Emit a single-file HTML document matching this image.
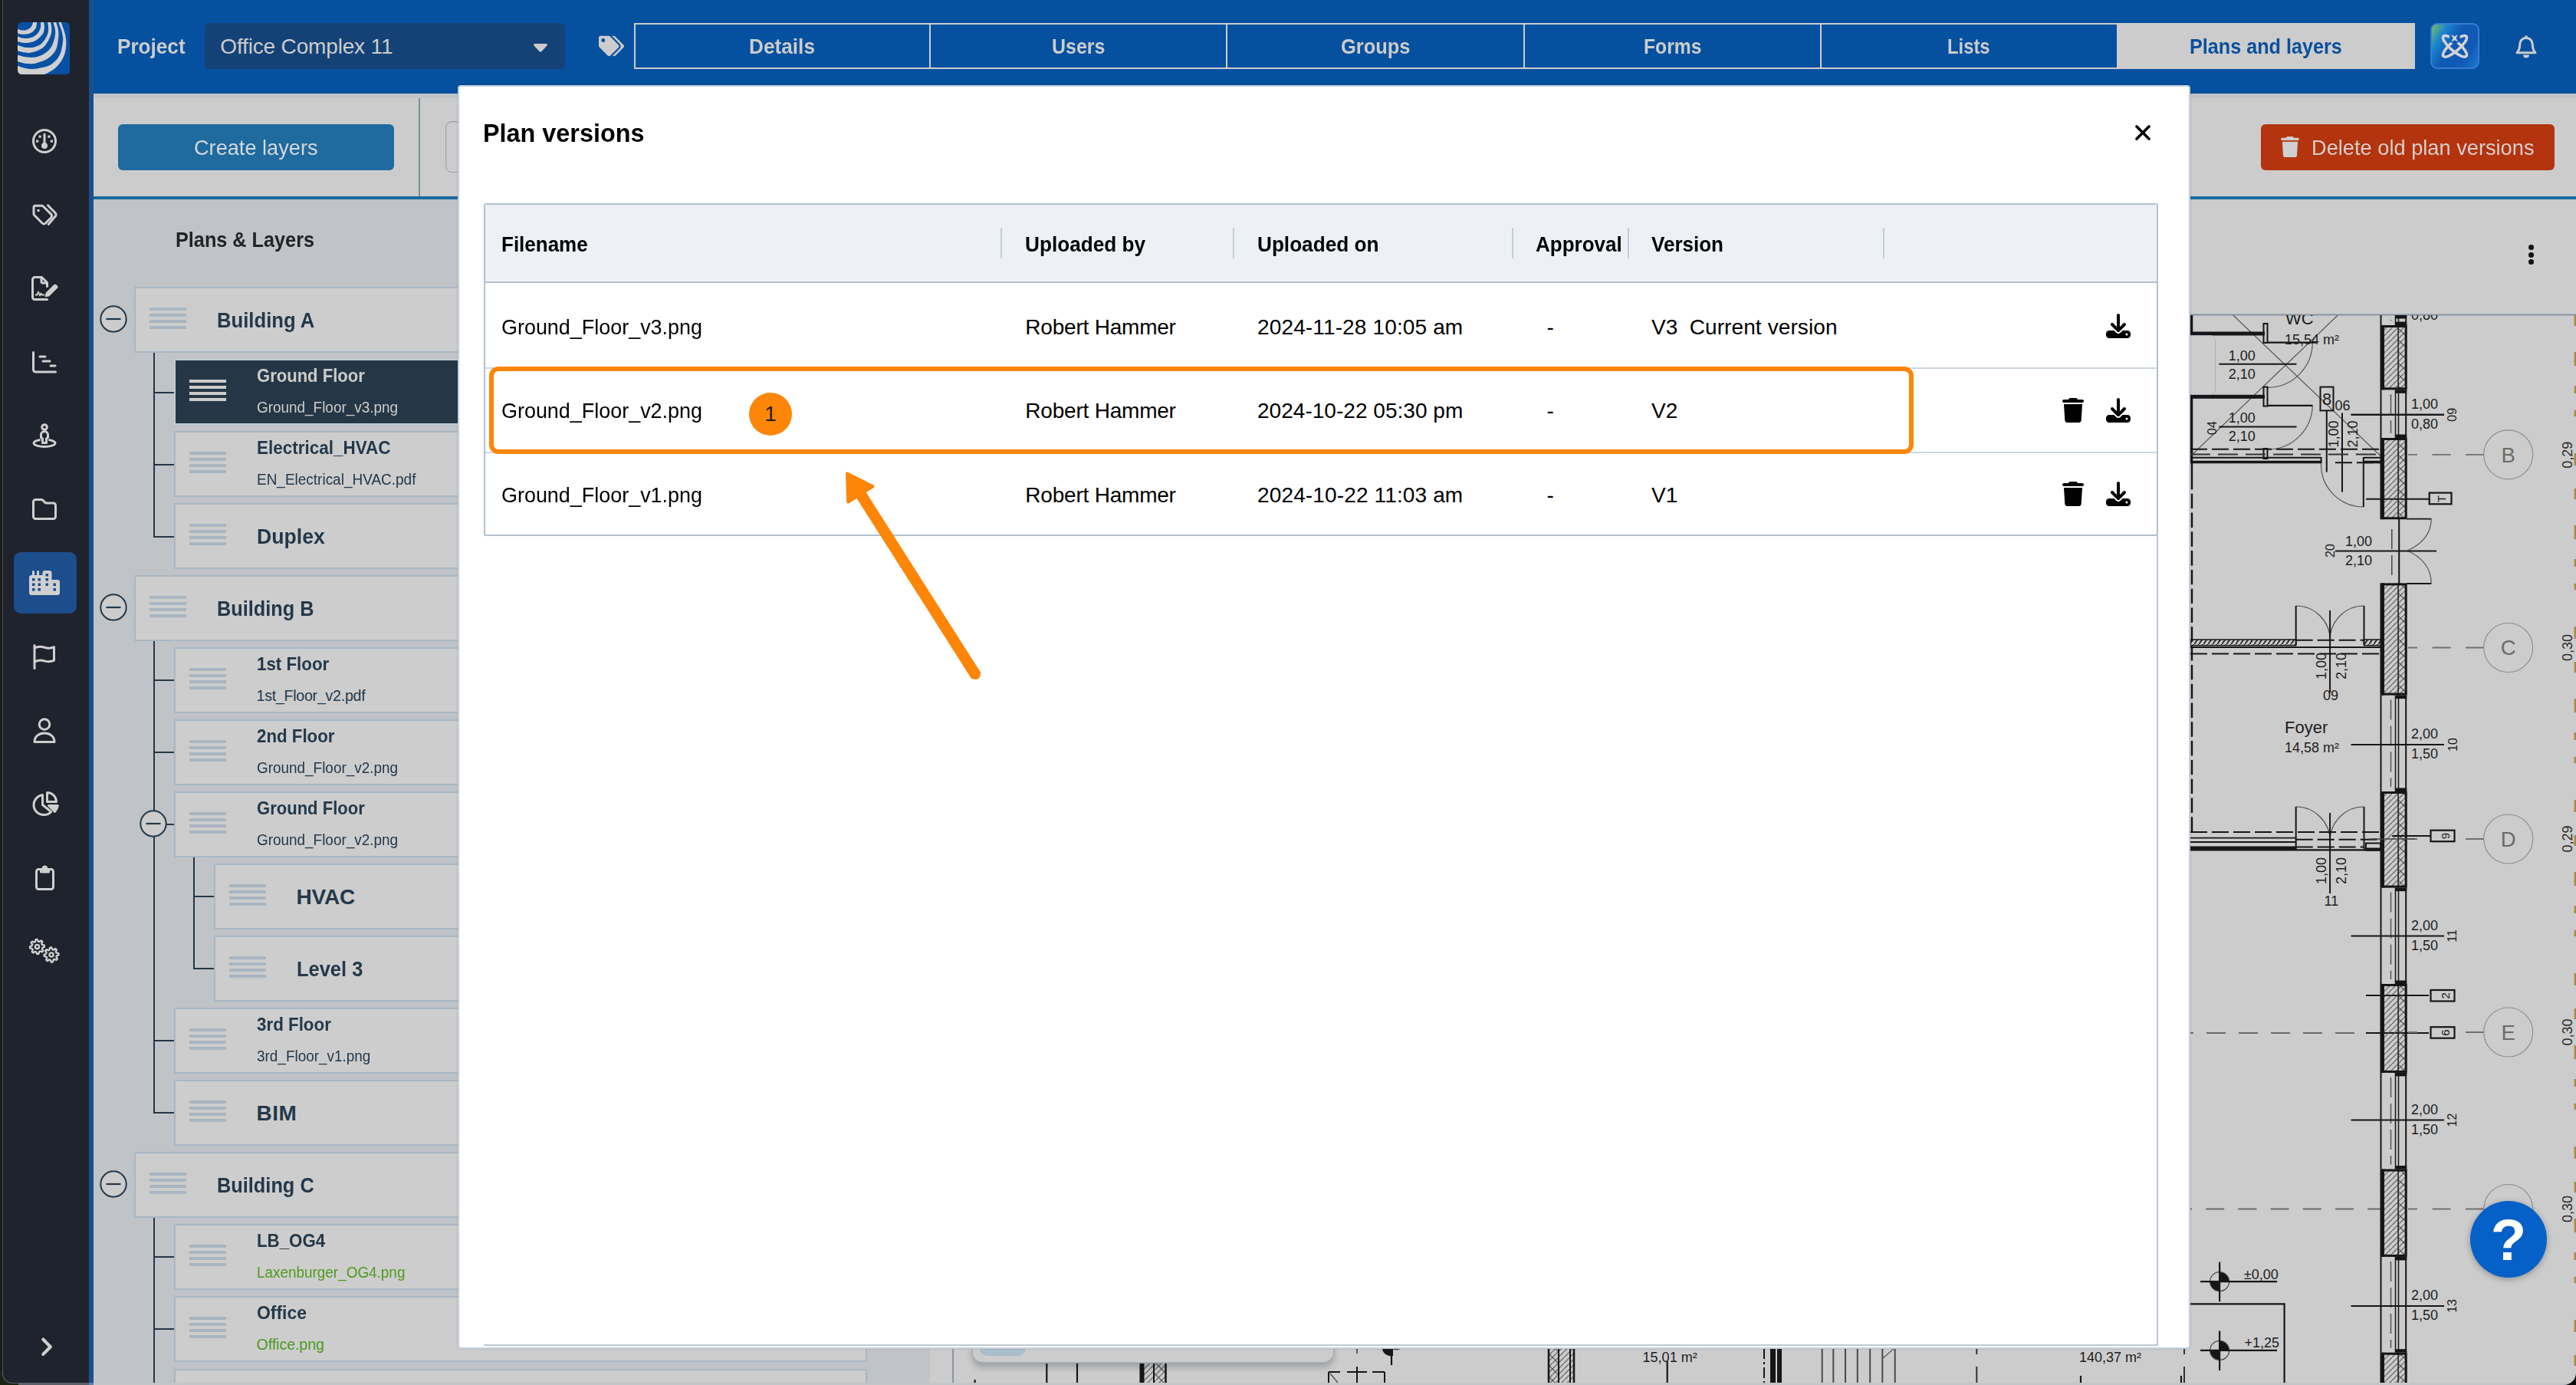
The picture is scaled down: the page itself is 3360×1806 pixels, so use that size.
<!DOCTYPE html>
<html lang="en"><head><meta charset="utf-8"><title>Plan versions</title>
<style>
html,body{margin:0;padding:0}
body{width:3360px;height:1806px;overflow:hidden;position:relative;background:#cccccc;font-family:'Liberation Sans',sans-serif}
div,span.t,svg{position:absolute;box-sizing:border-box}
span.t{white-space:pre;display:block;transform-origin:0 50%}
svg{overflow:visible}

</style></head>
<body>
<div style="left:0px;top:0px;width:116px;height:1806px;background:#1f232d"></div>
<div style="left:116px;top:0px;width:3244px;height:122px;background:#05509f"></div>
<div style="left:116px;top:0px;width:6px;height:1806px;background:#1b4f8c"></div>
<div style="left:122px;top:122px;width:3238px;height:6px;background:#c0c3c7"></div>
<div style="left:122px;top:128px;width:3238px;height:128px;background:#cccccc"></div>
<div style="left:122px;top:256px;width:3238px;height:4px;background:#1a6aa1"></div>
<div style="left:122px;top:260px;width:1091px;height:1546px;background:#c0c3c7"></div>
<div style="left:1213px;top:260px;width:2147px;height:1546px;background:#cccccc"></div>
<div style="left:546px;top:128px;width:2px;height:128px;background:#7f8f9d"></div>
<div style="left:154px;top:162px;width:360px;height:60px;background:#1f6a9e;border-radius:6px"></div>
<span class="t" style="left:253.2px;top:179.3px;font-size:28px;line-height:28px;color:#d2d8dd;transform:scaleX(0.9699);">Create layers</span>
<div style="left:580.5px;top:158.3px;width:60px;height:67px;border:1.500px solid #9f9f9f;border-radius:8px;background:#cccccc;box-shadow:inset 0 1px 2px rgba(0,0,0,0.08)"></div>
<div style="left:2949px;top:162px;width:383px;height:60px;background:#b3340f;border-radius:6px"></div>
<svg style="left:2975px;top:178px" width="24" height="27" viewBox="0 0 448 512"><path fill="#cfcfcf" d="M135.2 17.700L128 32H32C14.3 32 0 46.300 0 64S14.3 96 32 96H416c17.700 0 32-14.300 32-32s-14.300-32-32-32H320l-7.200-14.300C307.400 6.800 296.300 0 284.200 0H163.800c-12.100 0-23.200 6.800-28.600 17.700zM416 128H32L53.200 467c1.600 25.300 22.600 45 47.900 45H346.900c25.300 0 46.300-19.700 47.900-45L416 128z"/></svg>
<span class="t" style="left:3014.8px;top:179.3px;font-size:28px;line-height:28px;color:#d6cfcc;transform:scaleX(0.9721);">Delete old plan versions</span>
<div style="left:3298.2px;top:319.2px;width:7px;height:7px;background:#111;border-radius:50%"></div>
<div style="left:3298.2px;top:328.7px;width:7px;height:7px;background:#111;border-radius:50%"></div>
<div style="left:3298.2px;top:338.2px;width:7px;height:7px;background:#111;border-radius:50%"></div>
<span class="t" style="left:153.2px;top:47.3px;font-size:28px;line-height:28px;color:#cccccc;font-weight:700;transform:scaleX(0.9332);">Project</span>
<div style="left:267px;top:30px;width:470px;height:60px;background:#144277;border-radius:6px"></div>
<span class="t" style="left:287.3px;top:47.3px;font-size:28px;line-height:28px;color:#cccccc;letter-spacing:-0.16px;">Office Complex 11</span>
<svg style="left:696px;top:57px" width="18" height="11" viewBox="0 0 18 11"><path fill="#cccccc" d="M1.600 0h14.800c1.300 0 2 1.500 1.100 2.500l-7.300 7.800c-.7.700-1.800.7-2.400 0L.5 2.500C-.4 1.500.3 0 1.600 0z"/></svg>
<svg style="left:781px;top:46px" width="33" height="28" viewBox="0 0 640 512"><path fill="#cccccc" d="M497.900 225.900L286.100 14.100A48 48 0 0 0 252.100 0H48C21.500 0 0 21.500 0 48v204.100a48 48 0 0 0 14.100 33.900l211.900 211.900c18.700 18.700 49.100 18.700 67.900 0l204.100-204.100c18.700-18.700 18.700-49.100 0-67.900zM112 160c-26.500 0-48-21.500-48-48s21.500-48 48-48 48 21.500 48 48-21.500 48-48 48zm513.900 133.800L421.800 497.900c-18.700 18.700-49.100 18.700-67.900 0l-.4-.4L527.600 323.500c17-17 26.400-39.600 26.400-63.600s-9.400-46.600-26.400-63.600L331.400 0h48.700a48 48 0 0 1 33.900 14.100l211.900 211.900c18.700 18.700 18.700 49.100 0 67.900z"/></svg>
<div style="left:827px;top:30px;width:2323px;height:60px;border:2px solid #cccccc"></div>
<span class="t" style="left:977.0px;top:47.2px;font-size:28px;line-height:28px;color:#cccccc;font-weight:700;transform:scaleX(0.9365);">Details</span>
<div style="left:1212px;top:30px;width:2px;height:60px;background:#cccccc"></div>
<span class="t" style="left:1371.8px;top:47.2px;font-size:28px;line-height:28px;color:#cccccc;font-weight:700;transform:scaleX(0.8915);">Users</span>
<div style="left:1599px;top:30px;width:2px;height:60px;background:#cccccc"></div>
<span class="t" style="left:1748.8px;top:47.2px;font-size:28px;line-height:28px;color:#cccccc;font-weight:700;transform:scaleX(0.9080);">Groups</span>
<div style="left:1987px;top:30px;width:2px;height:60px;background:#cccccc"></div>
<span class="t" style="left:2143.8px;top:47.2px;font-size:28px;line-height:28px;color:#cccccc;font-weight:700;transform:scaleX(0.8811);">Forms</span>
<div style="left:2374px;top:30px;width:2px;height:60px;background:#cccccc"></div>
<span class="t" style="left:2540.2px;top:47.2px;font-size:28px;line-height:28px;color:#cccccc;font-weight:700;transform:scaleX(0.8507);">Lists</span>
<div style="left:2761px;top:30px;width:389px;height:60px;background:#cccccc"></div>
<span class="t" style="left:2856.2px;top:47.2px;font-size:28px;line-height:28px;color:#0a4f9e;font-weight:700;transform:scaleX(0.8990);">Plans and layers</span>
<div style="left:3170px;top:30px;width:64px;height:60px;border:2px solid #3a78d6;border-radius:9px;background:linear-gradient(122deg,#7cc35a 0%,#1b86cf 22%,#1059b5 45%,#1059b5 75%,#1a7ccd 100%)"></div>
<svg style="left:3181.500px;top:42px" width="40" height="36" viewBox="0 0 40 36">
<defs><mask id="aim"><rect x="-5" y="-5" width="50" height="46" fill="#fff"/><circle cx="19.700" cy="7.800" r="7.300" fill="#000"/></mask></defs>
<g fill="none" stroke="#d4d4d4" stroke-width="3.600" mask="url(#aim)">
<ellipse cx="20" cy="18.300" rx="19.800" ry="6.200" transform="rotate(41 20 18.300)"/>
<ellipse cx="20" cy="18.300" rx="19.800" ry="6.200" transform="rotate(-41 20 18.300)"/>
</g>
<path fill="#d4d4d4" d="M15.500 3 19.700 5.400 23.900 3 21.700 7.800 24 12.600 19.700 10.300 15.400 12.600 17.700 7.800z"/>
</svg>
<svg style="left:3281px;top:45px" width="28" height="32" viewBox="0 0 28 32">
<path fill="none" stroke="#cccccc" stroke-width="3" stroke-linejoin="round" d="M14 4.500c-5 0-8.300 3.800-8.300 8.800 0 5.600-1.700 8.200-3.700 10.400h24c-2-2.200-3.700-4.800-3.700-10.400 0-5-3.300-8.800-8.300-8.800z"/>
<path fill="#cccccc" d="M12.300 1.500h3.400v3.500h-3.400zM10 26.500h8a4 4 0 0 1-8 0z"/>
</svg>
<div style="left:0px;top:0px;width:3px;height:1806px;background:#1c1d17"></div>
<div style="left:3px;top:0px;width:1px;height:1806px;background:#4b4e52"></div>
<svg style="left:22.900px;top:28.900px" width="68" height="68" viewBox="0 0 68 68">
<defs><clipPath id="lg"><rect x="0" y="0" width="68" height="68" rx="5.500"/></clipPath></defs>
<g clip-path="url(#lg)">
<rect width="68" height="68" fill="#0651a5"/>
<g fill="#cfcfcf"><path d="M25.5 -2.5C25.5 -2.1 25.4 -1.2 25.2 0.0C25.0 1.2 24.9 3.5 24.5 5.0C24.1 6.5 23.5 7.9 22.8 9.1C22.1 10.2 21.1 11.1 20.1 11.9C19.1 12.7 18.0 13.4 16.8 14.0C15.7 14.6 14.5 15.0 13.2 15.3C11.9 15.6 10.5 15.7 9.1 15.8C7.7 15.9 6.5 15.9 5.0 15.7C3.5 15.5 1.2 14.9 0.0 14.6C-1.2 14.3 -2.1 14.1 -2.5 14.1L-2.5 8.4C-2.1 8.5 -1.2 8.8 0.0 9.1C1.2 9.4 3.6 10.3 5.0 10.5C6.4 10.7 7.4 10.6 8.6 10.5C9.8 10.4 10.9 10.2 11.9 9.9C12.9 9.6 13.7 9.2 14.6 8.6C15.5 8.0 16.6 7.2 17.3 6.4C18.0 5.6 18.5 4.7 19.0 3.6C19.5 2.5 19.8 1.0 20.1 0.0C20.4 -1.0 20.7 -2.1 20.9 -2.5z"/><path d="M33.9 -2.5C34.0 -2.1 34.0 -1.5 34.2 0.0C34.4 1.5 35.0 4.2 34.9 6.4C34.8 8.6 34.4 11.4 33.8 13.2C33.2 15.0 32.2 15.9 31.1 17.3C30.0 18.7 28.3 20.4 26.9 21.5C25.5 22.6 24.2 23.5 22.8 24.2C21.4 24.9 20.1 25.4 18.7 25.8C17.3 26.2 16.2 26.6 14.6 26.8C13.0 27.0 10.7 27.0 9.1 26.9C7.5 26.8 6.5 26.7 5.0 26.4C3.5 26.1 1.2 25.4 0.0 25.0C-1.2 24.6 -2.1 24.4 -2.5 24.3L-2.5 17.4C-2.1 17.6 -1.2 17.9 0.0 18.4C1.2 18.9 3.5 20.0 5.0 20.4C6.5 20.8 7.7 20.8 9.1 20.9C10.5 21.0 11.8 21.0 13.2 20.9C14.6 20.8 15.9 20.5 17.3 20.1C18.7 19.7 20.1 19.2 21.5 18.4C22.9 17.6 24.5 16.3 25.6 15.1C26.7 13.9 27.6 12.8 28.3 11.3C29.0 9.9 29.7 8.3 30.0 6.4C30.3 4.5 30.1 1.5 30.1 0.0C30.1 -1.5 30.1 -2.1 30.1 -2.5z"/><path d="M42.5 -2.5C42.6 -2.1 42.7 -1.5 43.0 0.0C43.3 1.5 44.0 4.4 44.2 6.4C44.4 8.4 44.4 10.1 44.2 11.9C44.0 13.7 43.7 15.6 43.1 17.3C42.5 19.0 41.7 20.8 40.9 22.3C40.1 23.8 39.4 25.1 38.5 26.5C37.6 27.9 36.6 29.6 35.5 30.8C34.4 32.0 33.8 32.7 32.1 33.8C30.5 34.9 27.6 36.4 25.6 37.3C23.6 38.2 21.9 38.7 20.1 39.1C18.3 39.5 16.9 39.9 14.6 39.9C12.3 39.9 8.8 39.4 6.4 39.0C4.0 38.6 1.5 37.7 0.0 37.3C-1.5 36.9 -2.1 36.7 -2.5 36.6L-2.5 28.8C-2.1 28.9 -1.2 29.2 0.0 29.7C1.2 30.2 3.5 31.1 5.0 31.6C6.5 32.1 7.7 32.5 9.1 32.7C10.5 33.0 11.8 33.0 13.2 33.1C14.6 33.2 15.9 33.2 17.3 33.1C18.7 33.0 20.1 32.7 21.5 32.4C22.9 32.1 24.2 31.7 25.6 31.1C27.0 30.5 28.5 29.8 29.7 28.9C30.9 28.0 32.0 26.9 33.0 25.8C34.0 24.7 34.8 23.7 35.7 22.3C36.6 20.9 37.7 19.0 38.4 17.3C39.1 15.6 39.6 13.7 39.9 11.9C40.2 10.1 40.2 8.4 40.1 6.4C40.0 4.4 39.3 1.5 39.0 0.0C38.7 -1.5 38.6 -2.1 38.6 -2.5z"/><path d="M49.3 -2.5C49.4 -2.1 49.6 -1.5 50.1 0.0C50.6 1.5 51.7 4.4 52.2 6.4C52.7 8.4 53.1 10.1 53.3 11.9C53.5 13.7 53.5 15.6 53.4 17.3C53.3 19.0 53.1 20.6 52.9 22.3C52.7 24.0 52.5 25.9 52.2 27.5C51.9 29.1 51.7 30.7 51.3 32.1C50.9 33.6 50.4 34.8 49.7 36.2C49.0 37.6 48.0 39.0 46.9 40.4C45.8 41.8 44.4 43.3 43.1 44.5C41.8 45.7 40.4 46.6 39.0 47.5C37.6 48.4 36.2 49.1 34.9 49.7C33.6 50.3 32.6 50.6 31.1 51.1C29.6 51.6 27.2 52.5 25.6 53.0C24.0 53.5 23.6 53.7 21.5 53.9C19.4 54.1 15.7 54.2 13.2 54.1C10.7 54.0 8.6 53.5 6.4 53.0C4.2 52.5 1.5 51.5 0.0 51.1C-1.5 50.7 -2.1 50.5 -2.5 50.4L-2.5 42.1C-2.1 42.2 -1.5 42.4 0.0 42.8C1.5 43.2 4.0 44.0 6.4 44.5C8.8 45.0 12.1 45.6 14.6 45.8C17.1 46.0 19.7 45.9 21.5 45.8C23.3 45.7 24.0 45.5 25.6 45.0C27.2 44.5 29.8 43.6 31.1 43.1C32.4 42.6 32.4 42.4 33.5 41.7C34.6 41.0 36.3 40.0 37.6 39.0C38.9 38.0 40.2 36.9 41.2 35.7C42.2 34.6 43.1 33.6 43.9 32.1C44.7 30.6 45.6 28.5 46.2 26.9C46.9 25.3 47.3 23.9 47.8 22.3C48.2 20.7 48.7 19.0 48.9 17.3C49.1 15.6 49.2 13.7 49.1 11.9C49.0 10.1 48.8 8.4 48.3 6.4C47.8 4.4 46.8 1.5 46.4 0.0C46.0 -1.5 45.8 -2.1 45.7 -2.5z"/><path d="M55.9 -2.5C56.1 -2.1 56.3 -1.5 56.8 0.0C57.3 1.5 58.3 4.4 59.0 6.4C59.7 8.4 60.4 10.1 60.9 11.9C61.4 13.7 61.9 15.6 62.3 17.3C62.7 19.0 62.9 20.7 63.1 22.3C63.3 23.9 63.3 25.3 63.3 26.9C63.3 28.5 63.3 30.3 63.1 32.1C62.9 33.9 62.7 35.8 62.3 37.6C61.9 39.4 61.4 41.3 60.7 43.1C60.0 44.9 59.2 46.8 58.2 48.6C57.2 50.4 56.0 52.4 54.6 54.1C53.2 55.8 51.7 57.5 50.0 59.0C48.3 60.5 46.3 61.9 44.5 63.1C42.7 64.3 40.6 65.4 39.0 66.2C37.4 67.0 36.3 67.3 34.9 68.0C33.5 68.7 31.2 69.8 30.5 70.2L-2.500 70.500L-2.5 55.9C-2.1 56.1 -1.5 56.3 0.0 56.8C1.5 57.3 4.0 58.4 6.4 59.0C8.8 59.6 12.3 60.4 14.6 60.7C16.9 61.0 18.3 61.0 20.1 60.9C21.9 60.8 23.8 60.7 25.6 60.4C27.4 60.1 29.3 59.6 31.1 59.3C32.9 58.9 34.7 58.7 36.2 58.3C37.8 57.9 39.0 57.4 40.4 56.8C41.8 56.1 43.1 55.3 44.5 54.4C45.9 53.5 47.3 52.4 48.6 51.1C49.9 49.9 51.2 48.3 52.2 46.9C53.2 45.5 54.1 44.1 54.9 42.6C55.7 41.1 56.3 39.4 56.8 37.6C57.3 35.9 57.6 33.9 57.9 32.1C58.2 30.3 58.6 28.5 58.8 26.9C59.0 25.3 59.2 23.9 59.2 22.3C59.2 20.7 59.0 19.0 58.7 17.3C58.4 15.6 58.1 13.7 57.6 11.9C57.1 10.1 56.4 8.4 55.7 6.4C55.0 4.4 53.9 1.5 53.4 0.0C52.9 -1.5 52.7 -2.1 52.5 -2.5z"/></g>
</g></svg>
<svg style="left:42.0px;top:168.0px" width="32" height="32" viewBox="0 0 32 32"><g fill="none" stroke="#cfcfcf" stroke-width="3" stroke-linecap="round" stroke-linejoin="round"><circle cx="16" cy="16" r="14.500"/><path d="M16 7v14" /><circle cx="16" cy="22" r="2.500" fill="#cfcfcf"/><g stroke="none" fill="#cfcfcf"><rect x="8.500" y="8.500" width="3.200" height="3.200"/><rect x="20.300" y="8.500" width="3.200" height="3.200"/><rect x="5" y="14.500" width="3.200" height="3.200"/><rect x="23.800" y="14.500" width="3.200" height="3.200"/></g></g></svg>
<svg style="left:42.0px;top:266.0px" width="32" height="28" viewBox="0 0 32 28"><g fill="none" stroke="#cfcfcf" stroke-width="3" stroke-linecap="round" stroke-linejoin="round"><path d="M2 4.500v8.200c0 .8.300 1.500.9 2.100l10.200 10.200c1.200 1.200 3.100 1.200 4.300 0l7.300-7.300c1.200-1.200 1.200-3.100 0-4.300L14.500 3.200c-.6-.6-1.300-.9-2.100-.9H4.200C3 2.300 2 3.300 2 4.500z"/><path d="M20.500 1.800l9.700 10c1.200 1.200 1.200 3.100 0 4.300L21.200 26.500"/><rect x="6.500" y="7" width="3" height="3" fill="#cfcfcf" stroke="none"/></g></svg>
<svg style="left:40.0px;top:360.0px" width="36" height="32" viewBox="0 0 36 32"><g fill="none" stroke="#cfcfcf" stroke-width="3" stroke-linecap="round" stroke-linejoin="round"><path d="M21.500 30.500H5.500c-1.700 0-3-1.300-3-3v-23c0-1.700 1.300-3 3-3h9l7 7v5"/><path d="M14 2v5c0 1.100.9 2 2 2h5"/><path d="M6.500 24.500h2l1.500-4 2 5 1.500-3 1 2h3" stroke-width="1.800"/><path fill="#cfcfcf" stroke-width="1.500" d="M19.500 26.500l1-4.500 10-10c.8-.8 2-.8 2.800 0l.7.700c.8.800.8 2 0 2.800l-10 10z"/></g></svg>
<svg style="left:42.0px;top:457.5px" width="32" height="29" viewBox="0 0 32 29"><g fill="none" stroke="#cfcfcf" stroke-width="3" stroke-linecap="round" stroke-linejoin="round"><path d="M1.500 1.500v22.500c0 1.700 1.300 3 3 3h26"/><path d="M10 7h7M14 13h9M24 19h6"/></g></svg>
<svg style="left:42.0px;top:552.0px" width="32" height="32" viewBox="0 0 32 32"><g fill="none" stroke="#cfcfcf" stroke-width="3" stroke-linecap="round" stroke-linejoin="round"><circle cx="16" cy="5" r="3.300"/><path d="M11.500 15c0-2.500 2-4.500 4.500-4.500s4.500 2 4.500 4.500v3.500l-2 1.500v5.500h-5v-5.500l-2-1.500z"/><path d="M9.500 21.800c-4.500.8-7.500 2.300-7.500 4 0 2.600 6.300 4.700 14 4.700s14-2.100 14-4.700c0-1.700-3-3.200-7.500-4"/></g></svg>
<svg style="left:42.0px;top:650.0px" width="32" height="28" viewBox="0 0 32 28"><g fill="none" stroke="#cfcfcf" stroke-width="3" stroke-linecap="round" stroke-linejoin="round"><path d="M1.500 23.500v-19c0-1.700 1.300-3 3-3h7.300c.8 0 1.600.3 2.100.9l2.700 2.700c.6.600 1.300.9 2.100.9h8.800c1.700 0 3 1.300 3 3v14.500c0 1.700-1.300 3-3 3h-23c-1.700 0-3-1.300-3-3z"/></g></svg>
<div style="left:18px;top:720px;width:82px;height:80px;background:#1b4e8b;border-radius:9px"></div>
<svg style="left:38px;top:744px" width="40" height="32" viewBox="0 0 40 32">
<path fill="#cfcfcf" d="M4 1.500c0-.8.700-1.500 1.500-1.500S7 .7 7 1.500V6h3V1.500C10 .7 10.700 0 11.500 0S13 .7 13 1.500V6h4.500V3c0-1.700 1.300-3 3-3h6c1.700 0 3 1.300 3 3v9h7.500c1.700 0 3 1.300 3 3v14c0 1.700-1.300 3-3 3H3c-1.700 0-3-1.300-3-3V9c0-1.700 1.300-3 3-3h1z"/>
<g fill="#1b4e8b"><rect x="4" y="10" width="3.500" height="3.500"/><rect x="11.500" y="10" width="3.500" height="3.500"/><rect x="4" y="16.500" width="3.500" height="3.500"/><rect x="11.500" y="16.500" width="3.500" height="3.500"/><rect x="4" y="23" width="3.500" height="3.500"/><rect x="11.500" y="23" width="3.500" height="3.500"/><rect x="21.500" y="4" width="3.500" height="3.500"/><rect x="21.500" y="10" width="3.500" height="3.500"/><rect x="21.500" y="16.500" width="3.500" height="3.500"/><rect x="31.500" y="16.500" width="3.500" height="3.500"/><rect x="31.500" y="23" width="3.500" height="3.500"/></g></svg>
<svg style="left:43.0px;top:839.5px" width="30" height="33" viewBox="0 0 30 33"><g fill="none" stroke="#cfcfcf" stroke-width="3" stroke-linecap="round" stroke-linejoin="round"><path d="M2 1.500v30"/><path d="M2 5c5-2.500 8.500-2.200 13-.8s8 1.500 12.500-.5v17.500c-4.500 2.200-8 2.200-12.500.7S7 20.500 2 23"/></g></svg>
<svg style="left:43.0px;top:935.5px" width="30" height="33" viewBox="0 0 30 33"><g fill="none" stroke="#cfcfcf" stroke-width="3" stroke-linecap="round" stroke-linejoin="round"><circle cx="15" cy="8.500" r="6.800"/><path d="M2 31.500c0-7 5.500-11.500 13-11.500s13 4.500 13 11.500z"/></g></svg>
<svg style="left:41.5px;top:1032.0px" width="35" height="32" viewBox="0 0 35 32"><g fill="none" stroke="#cfcfcf" stroke-width="3" stroke-linecap="round" stroke-linejoin="round"><path d="M13.500 4.500C7 5.500 2 11 2 17.800c0 7.400 6 12.700 13.400 12.700 3.600 0 6.900-1.400 9.300-3.800L13.500 17.500z"/><path d="M19.500 1.500v12h12c0-6.600-5.400-12-12-12z"/><path fill="#cfcfcf" d="M21.500 18.500h11.800c-.4 3-1.700 5.700-3.700 7.800z"/></g></svg>
<svg style="left:45.5px;top:1127.5px" width="25" height="33" viewBox="0 0 25 33"><g fill="none" stroke="#cfcfcf" stroke-width="3" stroke-linecap="round" stroke-linejoin="round"><path d="M8 5.500H4.500c-1.700 0-3 1.300-3 3v20c0 1.700 1.300 3 3 3h16c1.700 0 3-1.300 3-3v-20c0-1.700-1.300-3-3-3H17"/><path fill="#cfcfcf" d="M7.500 9V6.500c0-.6.400-1 1-1h1.200C10 3.500 11 2 12.500 2s2.500 1.500 2.800 3.500h1.200c.6 0 1 .4 1 1V9z"/></g></svg>
<svg style="left:37.5px;top:1224.0px" width="40" height="32" viewBox="0 0 40 32"><g fill="none" stroke="#cfcfcf" stroke-width="3" stroke-linecap="round" stroke-linejoin="round"><path d="M19.8 8.6 L20.0 10.7 L17.4 11.9 L16.9 13.3 L18.4 15.8 L17.1 17.3 L14.4 16.3 L13.1 17.0 L12.4 19.8 L10.3 20.0 L9.1 17.4 L7.7 16.9 L5.2 18.4 L3.7 17.1 L4.7 14.4 L4.0 13.1 L1.2 12.4 L1.0 10.3 L3.6 9.1 L4.1 7.7 L2.6 5.2 L3.9 3.7 L6.6 4.7 L7.9 4.0 L8.6 1.2 L10.7 1.0 L11.9 3.6 L13.3 4.1 L15.8 2.6 L17.3 3.9 L16.3 6.6 L17.0 7.9z" stroke-width="2.400"/><circle cx="10.5" cy="10.5" r="2.6" stroke-width="2.400"/><path d="M38.3 19.1 L38.5 21.2 L35.9 22.4 L35.4 23.8 L36.9 26.3 L35.6 27.8 L32.9 26.8 L31.6 27.5 L30.9 30.3 L28.8 30.5 L27.6 27.9 L26.2 27.4 L23.7 28.9 L22.2 27.6 L23.2 24.9 L22.5 23.6 L19.7 22.9 L19.5 20.8 L22.1 19.6 L22.6 18.2 L21.1 15.7 L22.4 14.2 L25.1 15.2 L26.4 14.5 L27.1 11.7 L29.2 11.5 L30.4 14.1 L31.8 14.6 L34.3 13.1 L35.8 14.4 L34.8 17.1 L35.5 18.4z" stroke-width="2.400"/><circle cx="29" cy="21" r="2.6" stroke-width="2.400"/></g></svg>
<svg style="left:52px;top:1742px" width="18" height="28" viewBox="0 0 18 28"><path fill="none" stroke="#cfcfcf" stroke-width="4.200" stroke-linecap="round" stroke-linejoin="round" d="M4.300 4.500 13.800 14.200 4.300 23.900"/></svg>
<span class="t" style="left:229.0px;top:299.0px;font-size:28px;line-height:28px;color:#222326;font-weight:700;transform:scaleX(0.9015);">Plans &amp; Layers</span>
<div style="left:200px;top:459px;width:2px;height:241px;background:#253746"></div>
<div style="left:200px;top:511px;width:27px;height:2px;background:#253746"></div>
<div style="left:200px;top:605px;width:27px;height:2px;background:#253746"></div>
<div style="left:200px;top:699px;width:27px;height:2px;background:#253746"></div>
<div style="left:200px;top:835px;width:2px;height:617px;background:#253746"></div>
<div style="left:200px;top:886px;width:27px;height:2px;background:#253746"></div>
<div style="left:200px;top:980px;width:27px;height:2px;background:#253746"></div>
<div style="left:200px;top:1074px;width:27px;height:2px;background:#253746"></div>
<div style="left:200px;top:1356px;width:27px;height:2px;background:#253746"></div>
<div style="left:200px;top:1450px;width:27px;height:2px;background:#253746"></div>
<div style="left:252px;top:1117px;width:2px;height:147px;background:#253746"></div>
<div style="left:252px;top:1168px;width:27px;height:2px;background:#253746"></div>
<div style="left:252px;top:1262px;width:27px;height:2px;background:#253746"></div>
<div style="left:200px;top:1587px;width:2px;height:219px;background:#253746"></div>
<div style="left:200px;top:1638px;width:27px;height:2px;background:#253746"></div>
<div style="left:200px;top:1732px;width:27px;height:2px;background:#253746"></div>
<div style="left:175px;top:374.1px;width:956px;height:85.8px;background:#cdcdcd;border:2px solid #a8b7c5"></div>
<div style="left:195px;top:401px;width:48px;height:4px;background:#a9b5c0"></div><div style="left:195px;top:409px;width:48px;height:4px;background:#a9b5c0"></div><div style="left:195px;top:417px;width:48px;height:4px;background:#a9b5c0"></div><div style="left:195px;top:425px;width:48px;height:4px;background:#a9b5c0"></div>
<span class="t" style="left:282.5px;top:404.1px;font-size:28px;line-height:28px;color:#24384a;font-weight:700;transform:scaleX(0.9170);">Building A</span>
<svg style="left:129.5px;top:398px" width="36" height="36" viewBox="0 0 36 36"><circle cx="18" cy="18" r="16.700" fill="#cccccc" stroke="#22384b" stroke-width="2"/><path d="M8.500 18h19" stroke="#22384b" stroke-width="2.200"/></svg>
<div style="left:227px;top:468.1px;width:904px;height:85.8px;background:#253746;border:2px solid #c3ccd4"></div>
<div style="left:247px;top:495px;width:48px;height:4px;background:#cccccc"></div><div style="left:247px;top:503px;width:48px;height:4px;background:#cccccc"></div><div style="left:247px;top:511px;width:48px;height:4px;background:#cccccc"></div><div style="left:247px;top:519px;width:48px;height:4px;background:#cccccc"></div>
<span class="t" style="left:334.5px;top:478.4px;font-size:24px;line-height:24px;color:#cccccc;font-weight:700;transform:scaleX(0.9184);">Ground Floor</span>
<span class="t" style="left:334.5px;top:522.2px;font-size:19.5px;line-height:19.5px;color:#cccccc;transform:scaleX(0.9699);">Ground_Floor_v3.png</span>
<div style="left:227px;top:562.1px;width:904px;height:85.8px;background:#cdcdcd;border:2px solid #a8b7c5"></div>
<div style="left:247px;top:589px;width:48px;height:4px;background:#a9b5c0"></div><div style="left:247px;top:597px;width:48px;height:4px;background:#a9b5c0"></div><div style="left:247px;top:605px;width:48px;height:4px;background:#a9b5c0"></div><div style="left:247px;top:613px;width:48px;height:4px;background:#a9b5c0"></div>
<span class="t" style="left:334.5px;top:572.4px;font-size:24px;line-height:24px;color:#24384a;font-weight:700;transform:scaleX(0.9361);">Electrical_HVAC</span>
<span class="t" style="left:334.5px;top:616.2px;font-size:19.5px;line-height:19.5px;color:#24384a;transform:scaleX(0.9731);">EN_Electrical_HVAC.pdf</span>
<div style="left:227px;top:656.1px;width:904px;height:85.8px;background:#cdcdcd;border:2px solid #a8b7c5"></div>
<div style="left:247px;top:683px;width:48px;height:4px;background:#a9b5c0"></div><div style="left:247px;top:691px;width:48px;height:4px;background:#a9b5c0"></div><div style="left:247px;top:699px;width:48px;height:4px;background:#a9b5c0"></div><div style="left:247px;top:707px;width:48px;height:4px;background:#a9b5c0"></div>
<span class="t" style="left:334.5px;top:686.1px;font-size:28px;line-height:28px;color:#24384a;font-weight:700;transform:scaleX(0.9512);">Duplex</span>
<div style="left:175px;top:750.1px;width:956px;height:85.8px;background:#cdcdcd;border:2px solid #a8b7c5"></div>
<div style="left:195px;top:777px;width:48px;height:4px;background:#a9b5c0"></div><div style="left:195px;top:785px;width:48px;height:4px;background:#a9b5c0"></div><div style="left:195px;top:793px;width:48px;height:4px;background:#a9b5c0"></div><div style="left:195px;top:801px;width:48px;height:4px;background:#a9b5c0"></div>
<span class="t" style="left:282.5px;top:780.1px;font-size:28px;line-height:28px;color:#24384a;font-weight:700;transform:scaleX(0.9037);">Building B</span>
<svg style="left:129.5px;top:774px" width="36" height="36" viewBox="0 0 36 36"><circle cx="18" cy="18" r="16.700" fill="#cccccc" stroke="#22384b" stroke-width="2"/><path d="M8.500 18h19" stroke="#22384b" stroke-width="2.200"/></svg>
<div style="left:227px;top:844.1px;width:904px;height:85.8px;background:#cdcdcd;border:2px solid #a8b7c5"></div>
<div style="left:247px;top:871px;width:48px;height:4px;background:#a9b5c0"></div><div style="left:247px;top:879px;width:48px;height:4px;background:#a9b5c0"></div><div style="left:247px;top:887px;width:48px;height:4px;background:#a9b5c0"></div><div style="left:247px;top:895px;width:48px;height:4px;background:#a9b5c0"></div>
<span class="t" style="left:334.5px;top:854.4px;font-size:24px;line-height:24px;color:#24384a;font-weight:700;transform:scaleX(0.9295);">1st Floor</span>
<span class="t" style="left:334.5px;top:898.2px;font-size:19.5px;line-height:19.5px;color:#24384a;letter-spacing:-0.21px;">1st_Floor_v2.pdf</span>
<div style="left:227px;top:938.1px;width:904px;height:85.8px;background:#cdcdcd;border:2px solid #a8b7c5"></div>
<div style="left:247px;top:965px;width:48px;height:4px;background:#a9b5c0"></div><div style="left:247px;top:973px;width:48px;height:4px;background:#a9b5c0"></div><div style="left:247px;top:981px;width:48px;height:4px;background:#a9b5c0"></div><div style="left:247px;top:989px;width:48px;height:4px;background:#a9b5c0"></div>
<span class="t" style="left:334.5px;top:948.4px;font-size:24px;line-height:24px;color:#24384a;font-weight:700;transform:scaleX(0.9284);">2nd Floor</span>
<span class="t" style="left:334.5px;top:992.2px;font-size:19.5px;line-height:19.5px;color:#24384a;transform:scaleX(0.9699);">Ground_Floor_v2.png</span>
<div style="left:227px;top:1032.1px;width:904px;height:85.8px;background:#cdcdcd;border:2px solid #a8b7c5"></div>
<div style="left:247px;top:1059px;width:48px;height:4px;background:#a9b5c0"></div><div style="left:247px;top:1067px;width:48px;height:4px;background:#a9b5c0"></div><div style="left:247px;top:1075px;width:48px;height:4px;background:#a9b5c0"></div><div style="left:247px;top:1083px;width:48px;height:4px;background:#a9b5c0"></div>
<span class="t" style="left:334.5px;top:1042.4px;font-size:24px;line-height:24px;color:#24384a;font-weight:700;transform:scaleX(0.9184);">Ground Floor</span>
<span class="t" style="left:334.5px;top:1086.2px;font-size:19.5px;line-height:19.5px;color:#24384a;transform:scaleX(0.9699);">Ground_Floor_v2.png</span>
<svg style="left:181.5px;top:1056px" width="36" height="36" viewBox="0 0 36 36"><circle cx="18" cy="18" r="16.700" fill="#cccccc" stroke="#22384b" stroke-width="2"/><path d="M8.500 18h19" stroke="#22384b" stroke-width="2.200"/></svg>
<div style="left:279px;top:1126.1px;width:852px;height:85.8px;background:#cdcdcd;border:2px solid #a8b7c5"></div>
<div style="left:299px;top:1153px;width:48px;height:4px;background:#a9b5c0"></div><div style="left:299px;top:1161px;width:48px;height:4px;background:#a9b5c0"></div><div style="left:299px;top:1169px;width:48px;height:4px;background:#a9b5c0"></div><div style="left:299px;top:1177px;width:48px;height:4px;background:#a9b5c0"></div>
<span class="t" style="left:386.5px;top:1156.1px;font-size:28px;line-height:28px;color:#24384a;font-weight:700;letter-spacing:-0.22px;">HVAC</span>
<div style="left:279px;top:1220.1px;width:852px;height:85.8px;background:#cdcdcd;border:2px solid #a8b7c5"></div>
<div style="left:299px;top:1247px;width:48px;height:4px;background:#a9b5c0"></div><div style="left:299px;top:1255px;width:48px;height:4px;background:#a9b5c0"></div><div style="left:299px;top:1263px;width:48px;height:4px;background:#a9b5c0"></div><div style="left:299px;top:1271px;width:48px;height:4px;background:#a9b5c0"></div>
<span class="t" style="left:386.5px;top:1250.1px;font-size:28px;line-height:28px;color:#24384a;font-weight:700;transform:scaleX(0.9089);">Level 3</span>
<div style="left:227px;top:1314.1px;width:904px;height:85.8px;background:#cdcdcd;border:2px solid #a8b7c5"></div>
<div style="left:247px;top:1341px;width:48px;height:4px;background:#a9b5c0"></div><div style="left:247px;top:1349px;width:48px;height:4px;background:#a9b5c0"></div><div style="left:247px;top:1357px;width:48px;height:4px;background:#a9b5c0"></div><div style="left:247px;top:1365px;width:48px;height:4px;background:#a9b5c0"></div>
<span class="t" style="left:334.5px;top:1324.4px;font-size:24px;line-height:24px;color:#24384a;font-weight:700;transform:scaleX(0.9316);">3rd Floor</span>
<span class="t" style="left:334.5px;top:1368.2px;font-size:19.5px;line-height:19.5px;color:#24384a;transform:scaleX(0.9708);">3rd_Floor_v1.png</span>
<div style="left:227px;top:1408.1px;width:904px;height:85.8px;background:#cdcdcd;border:2px solid #a8b7c5"></div>
<div style="left:247px;top:1435px;width:48px;height:4px;background:#a9b5c0"></div><div style="left:247px;top:1443px;width:48px;height:4px;background:#a9b5c0"></div><div style="left:247px;top:1451px;width:48px;height:4px;background:#a9b5c0"></div><div style="left:247px;top:1459px;width:48px;height:4px;background:#a9b5c0"></div>
<span class="t" style="left:334.5px;top:1438.1px;font-size:28px;line-height:28px;color:#24384a;font-weight:700;letter-spacing:0.46px;">BIM</span>
<div style="left:175px;top:1502.1px;width:956px;height:85.8px;background:#cdcdcd;border:2px solid #a8b7c5"></div>
<div style="left:195px;top:1529px;width:48px;height:4px;background:#a9b5c0"></div><div style="left:195px;top:1537px;width:48px;height:4px;background:#a9b5c0"></div><div style="left:195px;top:1545px;width:48px;height:4px;background:#a9b5c0"></div><div style="left:195px;top:1553px;width:48px;height:4px;background:#a9b5c0"></div>
<span class="t" style="left:282.5px;top:1532.1px;font-size:28px;line-height:28px;color:#24384a;font-weight:700;transform:scaleX(0.9051);">Building C</span>
<svg style="left:129.5px;top:1526px" width="36" height="36" viewBox="0 0 36 36"><circle cx="18" cy="18" r="16.700" fill="#cccccc" stroke="#22384b" stroke-width="2"/><path d="M8.500 18h19" stroke="#22384b" stroke-width="2.200"/></svg>
<div style="left:227px;top:1596.1px;width:904px;height:85.8px;background:#cdcdcd;border:2px solid #a8b7c5"></div>
<div style="left:247px;top:1623px;width:48px;height:4px;background:#a9b5c0"></div><div style="left:247px;top:1631px;width:48px;height:4px;background:#a9b5c0"></div><div style="left:247px;top:1639px;width:48px;height:4px;background:#a9b5c0"></div><div style="left:247px;top:1647px;width:48px;height:4px;background:#a9b5c0"></div>
<span class="t" style="left:334.5px;top:1606.4px;font-size:24px;line-height:24px;color:#24384a;font-weight:700;transform:scaleX(0.9278);">LB_OG4</span>
<span class="t" style="left:334.5px;top:1650.2px;font-size:19.5px;line-height:19.5px;color:#4f9a1f;transform:scaleX(0.9695);">Laxenburger_OG4.png</span>
<div style="left:227px;top:1690.1px;width:904px;height:85.8px;background:#cdcdcd;border:2px solid #a8b7c5"></div>
<div style="left:247px;top:1717px;width:48px;height:4px;background:#a9b5c0"></div><div style="left:247px;top:1725px;width:48px;height:4px;background:#a9b5c0"></div><div style="left:247px;top:1733px;width:48px;height:4px;background:#a9b5c0"></div><div style="left:247px;top:1741px;width:48px;height:4px;background:#a9b5c0"></div>
<span class="t" style="left:334.5px;top:1700.4px;font-size:24px;line-height:24px;color:#24384a;font-weight:700;transform:scaleX(0.9557);">Office</span>
<span class="t" style="left:334.5px;top:1744.2px;font-size:19.5px;line-height:19.5px;color:#4f9a1f;letter-spacing:-0.02px;">Office.png</span>
<div style="left:227px;top:1785px;width:904px;height:84px;background:#cdcdcd;border:2px solid #a8b7c5"></div>
<svg style="left:0;top:0" width="3360" height="1806" viewBox="0 0 3360 1806" font-family="'Liberation Sans',sans-serif" fill="none">
<defs>
<pattern id="hat" width="7.500" height="7.500" patternUnits="userSpaceOnUse"><path d="M-1 8.500L8.500 -1" stroke="#4a4a4a" stroke-width="1.100"/></pattern>
<pattern id="hat2" width="15" height="15" patternUnits="userSpaceOnUse"><path d="M-1 -1L16 16" stroke="#4a4a4a" stroke-width="1.100"/></pattern>
<pattern id="hat3" width="6" height="8" patternUnits="userSpaceOnUse"><path d="M0 8L6 0" stroke="#222" stroke-width="1.800"/></pattern>
<clipPath id="planclip"><rect x="2857" y="411" width="503" height="1392"/></clipPath>
<clipPath id="stripclip"><rect x="1244" y="1759" width="1613" height="44"/></clipPath>
</defs>
<path d="M2857 410.500H3360" stroke="#8794a1" stroke-width="2"/>
<g clip-path="url(#planclip)">
<path d="M2912.8 411L3105.6 595" stroke="#555" stroke-width="1.2" fill="none"/>
<path d="M3049.3 411L2857 595" stroke="#555" stroke-width="1.2" fill="none"/>
<path d="M3016.300 446.600A58.700 58.700 0 0 1 2957.600 505.300" stroke="#555" stroke-width="1.2" fill="none"/>
<path d="M3016.300 528.900A58.700 58.700 0 0 1 2962 586" stroke="#555" stroke-width="1.2" fill="none"/>
<path d="M3027.600 603.600A55.200 55.200 0 0 0 3082.800 661" stroke="#555" stroke-width="1.2" fill="none"/>
<path d="M2994.700 790A44.400 44.400 0 0 1 3039.100 834.400" stroke="#555" stroke-width="1.2" fill="none"/>
<path d="M3083.500 790A44.400 44.400 0 0 0 3039.100 834.400" stroke="#555" stroke-width="1.2" fill="none"/>
<path d="M2994.700 1052A44.400 44.400 0 0 1 3039.100 1096.400" stroke="#555" stroke-width="1.2" fill="none"/>
<path d="M3083.500 1052A44.400 44.400 0 0 0 3039.100 1096.400" stroke="#555" stroke-width="1.2" fill="none"/>
<path d="M3171.200 676.700Q3171 704 3140 718" stroke="#555" stroke-width="1.2" fill="none"/>
<path d="M3171.200 761Q3171 732 3140 718" stroke="#555" stroke-width="1.2" fill="none"/>
<path d="M2858.5 411L2858.5 603" stroke="#161616" stroke-width="3.5" />
<path d="M2859 603L2859 619" stroke="#161616" stroke-width="2.4" />
<path d="M2859 618.9L2859 1086" stroke="#161616" stroke-width="2.4" stroke-dasharray="19.400 5.400" />
<rect x="2857" y="432.500" width="97" height="5" fill="#161616"/>
<rect x="2857" y="514.800" width="97" height="5" fill="#161616"/>
<rect x="2952.5" y="422" width="5" height="25" fill="none" stroke="#161616" stroke-width="2"/>
<rect x="2952.5" y="504.6" width="5" height="25" fill="none" stroke="#161616" stroke-width="2"/>
<rect x="2952.5" y="585" width="5" height="13" fill="none" stroke="#161616" stroke-width="2"/>
<path d="M2957.6 446.6L3021 446.6" stroke="#161616" stroke-width="2.2" />
<path d="M2957.6 528.9L3016.5 528.9" stroke="#161616" stroke-width="2.2" />
<path d="M2894.4 474.7L2995.5 474.7" stroke="#161616" stroke-width="2" />
<path d="M2894.4 556.4L2995.5 556.4" stroke="#161616" stroke-width="2" />
<text x="2981" y="423.4" font-size="22" fill="#1c1c1c" text-anchor="start">WC</text>
<text x="2980" y="449.4" font-size="18" fill="#1c1c1c" text-anchor="start">15,54 m²</text>
<text x="2906.7" y="470.4" font-size="18" fill="#1c1c1c" text-anchor="start">1,00</text>
<text x="2906.7" y="493.6" font-size="18" fill="#1c1c1c" text-anchor="start">2,10</text>
<text x="2906.7" y="551" font-size="18" fill="#1c1c1c" text-anchor="start">1,00</text>
<text x="2906.7" y="575" font-size="18" fill="#1c1c1c" text-anchor="start">2,10</text>
<text x="2891" y="567" font-size="16" fill="#1c1c1c" text-anchor="start" transform="rotate(-90 2891 567)">04</text>
<rect x="3026.5" y="504.6" width="17" height="30.8" fill="none" stroke="#161616" stroke-width="2"/>
<text x="3035" y="528" font-size="22" fill="#1c1c1c" text-anchor="middle">8</text>
<text x="3045.6" y="535.4" font-size="18" fill="#1c1c1c" text-anchor="start">06</text>
<path d="M3034.8 535.4L3034.8 615.5" stroke="#161616" stroke-width="2" />
<path d="M3055 538.6L3055 641.5" stroke="#161616" stroke-width="2" />
<text x="3049.5" y="583.5" font-size="18" fill="#1c1c1c" text-anchor="start" transform="rotate(-90 3049.5 583.5)">1,00</text>
<text x="3074.5" y="583.5" font-size="18" fill="#1c1c1c" text-anchor="start" transform="rotate(-90 3074.5 583.5)">2,10</text>
<path d="M3066.6 540.8L3188 540.8" stroke="#161616" stroke-width="2" />
<path d="M2857 585.8L3105 585.8" stroke="#161616" stroke-width="2" stroke-dasharray="22 6" />
<path d="M2857 592.5L3105 592.5" stroke="#333" stroke-width="1.8" stroke-dasharray="26 10" />
<path d="M3046 603.2L3105 603.2" stroke="#161616" stroke-width="2" stroke-dasharray="22 6" />
<path d="M2857 596.8L3027.6 596.8" stroke="#161616" stroke-width="2" />
<path d="M2857 602.5L3027.6 602.5" stroke="#161616" stroke-width="3.5" />
<path d="M3027.6 596L3027.6 604" stroke="#161616" stroke-width="2" />
<path d="M3082.8 596.8L3105.6 596.8" stroke="#161616" stroke-width="2" />
<path d="M3082.8 602.5L3105.6 602.5" stroke="#161616" stroke-width="3.5" />
<path d="M3082.8 596L3082.8 661" stroke="#161616" stroke-width="2" />
<path d="M3086 650.8L3168.7 650.8" stroke="#161616" stroke-width="2" />
<rect x="3168.7" y="642.6" width="28.8" height="14.7" fill="none" stroke="#161616" stroke-width="2.2"/>
<text x="3190" y="655" font-size="15" fill="#1c1c1c" text-anchor="start" transform="rotate(-90 3190 655)">T</text>
<path d="M3139.3 676.7L3171.2 676.7" stroke="#161616" stroke-width="1.8" />
<path d="M3139.3 761L3171.2 761" stroke="#161616" stroke-width="1.8" />
<path d="M3045.8 718.6L3178 718.6" stroke="#161616" stroke-width="2" />
<path d="M3119.8 690L3119.8 756" stroke="#444" stroke-width="1.5" stroke-dasharray="26 8" />
<path d="M3129 676.7L3129 761" stroke="#161616" stroke-width="1.5" />
<text x="3059" y="711.7" font-size="18" fill="#1c1c1c" text-anchor="start">1,00</text>
<text x="3059" y="737.2" font-size="18" fill="#1c1c1c" text-anchor="start">2,10</text>
<text x="3045" y="727" font-size="16" fill="#1c1c1c" text-anchor="start" transform="rotate(-90 3045 727)">20</text>
<rect x="2857" y="834" width="137.700" height="7.600" fill="url(#hat3)" stroke="#161616" stroke-width="1.500"/>
<rect x="3083.500" y="834" width="22" height="7.600" fill="url(#hat3)" stroke="#161616" stroke-width="1.500"/>
<path d="M2857 844L3105 844" stroke="#161616" stroke-width="2" />
<path d="M2994.7 834.7L3083.5 834.7" stroke="#161616" stroke-width="2" stroke-dasharray="22 6" />
<path d="M2857 852.4L3105 852.4" stroke="#161616" stroke-width="2" stroke-dasharray="22 6" />
<path d="M2994.7 790L2994.7 841" stroke="#161616" stroke-width="2" />
<path d="M3083.5 790L3083.5 841" stroke="#161616" stroke-width="2" />
<path d="M3039.1 796L3039.1 903.3" stroke="#161616" stroke-width="2" />
<text x="3034" y="886" font-size="18" fill="#1c1c1c" text-anchor="start" transform="rotate(-90 3034 886)">1,00</text>
<text x="3060" y="886" font-size="18" fill="#1c1c1c" text-anchor="start" transform="rotate(-90 3060 886)">2,10</text>
<text x="3030" y="913" font-size="18" fill="#1c1c1c" text-anchor="start">09</text>
<text x="2980" y="956" font-size="22" fill="#1c1c1c" text-anchor="start">Foyer</text>
<text x="2980" y="981.3" font-size="18" fill="#1c1c1c" text-anchor="start">14,58 m²</text>
<path d="M2857 1085L3105 1085" stroke="#161616" stroke-width="2" stroke-dasharray="22 6" />
<path d="M2994.7 1094.8L3105 1094.8" stroke="#161616" stroke-width="2" stroke-dasharray="22 6" />
<path d="M2994.7 1104.5L3083 1104.5" stroke="#161616" stroke-width="2" stroke-dasharray="22 6" />
<path d="M2857 1092.6L2994.7 1092.6" stroke="#161616" stroke-width="1.8" />
<path d="M2857 1098L2994.7 1098" stroke="#161616" stroke-width="1.8" />
<rect x="2857" y="1103.500" width="137.700" height="6" fill="#161616"/>
<path d="M2994.7 1108.3L3105 1108.3" stroke="#161616" stroke-width="2.2" />
<rect x="3086" y="1099.5" width="19" height="9" fill="none" stroke="#161616" stroke-width="2"/>
<path d="M3086 1107.5L3105 1107.5" stroke="#161616" stroke-width="4" />
<path d="M2994.7 1052L2994.7 1108" stroke="#161616" stroke-width="2" />
<path d="M3083.5 1052L3083.5 1108" stroke="#161616" stroke-width="2" />
<path d="M3039.1 1060L3039.1 1165" stroke="#161616" stroke-width="2" />
<text x="3034" y="1153" font-size="18" fill="#1c1c1c" text-anchor="start" transform="rotate(-90 3034 1153)">1,00</text>
<text x="3060" y="1153" font-size="18" fill="#1c1c1c" text-anchor="start" transform="rotate(-90 3060 1153)">2,10</text>
<text x="3031.5" y="1181.4" font-size="18" fill="#1c1c1c" text-anchor="start">11</text>
<path d="M2857 1346.9L3072 1346.9" stroke="#6a6a6a" stroke-width="2" stroke-dasharray="25 17" stroke-dashoffset="21"/>
<path d="M2857 1576.6L3105 1576.6" stroke="#6a6a6a" stroke-width="2" stroke-dasharray="24 18.200" stroke-dashoffset="22"/>
<path d="M3086 1298L3168 1298" stroke="#161616" stroke-width="2" />
<path d="M3086 1346.9L3168 1346.9" stroke="#161616" stroke-width="2" />
<path d="M2895.1 1671.2L2895.1 1658.7A12.500 12.500 0 0 1 2907.6 1671.2z" stroke="none" stroke-width="0" fill="#161616"/>
<path d="M2895.1 1671.2L2895.1 1683.7A12.500 12.500 0 0 1 2882.6 1671.2z" stroke="none" stroke-width="0" fill="#161616"/>
<circle cx="2895.1" cy="1671.2" r="12.500" fill="none" stroke="#444" stroke-width="1.200"/>
<path d="M2895.1 1645.7L2895.1 1697.2" stroke="#161616" stroke-width="2.2" />
<path d="M2870.1 1671.2L2970.1 1671.2" stroke="#161616" stroke-width="2.2" />
<text x="2926.8" y="1667.7" font-size="18" fill="#1c1c1c" text-anchor="start">±0,00</text>
<path d="M2895.1 1760.9L2895.1 1748.4A12.500 12.500 0 0 1 2907.6 1760.9z" stroke="none" stroke-width="0" fill="#161616"/>
<path d="M2895.1 1760.9L2895.1 1773.4A12.500 12.500 0 0 1 2882.6 1760.9z" stroke="none" stroke-width="0" fill="#161616"/>
<circle cx="2895.1" cy="1760.9" r="12.500" fill="none" stroke="#444" stroke-width="1.200"/>
<path d="M2895.1 1735.4L2895.1 1786.9" stroke="#161616" stroke-width="2.2" />
<path d="M2870.1 1760.9L2970.1 1760.9" stroke="#161616" stroke-width="2.2" />
<text x="2927.5" y="1757.4" font-size="18" fill="#1c1c1c" text-anchor="start">+1,25</text>
<path d="M2857 1700.4L2979.6 1700.4" stroke="#161616" stroke-width="2.2" />
<path d="M2979.6 1699.3L2979.6 1803" stroke="#161616" stroke-width="2.2" />
<path d="M3105.5 411L3105.5 424" stroke="#161616" stroke-width="2" />
<path d="M3124.5 411L3124.5 424" stroke="#161616" stroke-width="1.5" />
<path d="M3128.5 411L3128.5 424" stroke="#161616" stroke-width="1.5" />
<path d="M3138.2 411L3138.2 424" stroke="#161616" stroke-width="2" />
<path d="M3118.5 417L3118.5 418" stroke="#555" stroke-width="1.5" stroke-dasharray="26 8" />
<rect x="3124.5" y="411" width="14.699999999999818" height="4.500" fill="#161616"/>
<rect x="3124.5" y="419.5" width="14.699999999999818" height="4.500" fill="#161616"/>
<rect x="3104.5" y="424" width="34.69999999999982" height="84.30000000000001" fill="url(#hat)"/>
<rect x="3128.096" y="424" width="11.103999999999814" height="84.30000000000001" fill="url(#hat2)"/>
<rect x="3107.0" y="425.5" width="31.199999999999818" height="81.30000000000001" fill="none" stroke="#161616" stroke-width="3"/>
<rect x="3104.5" y="424" width="5.500" height="84.30000000000001" fill="#161616"/>
<path d="M3128.096 424L3128.096 508.3" stroke="#161616" stroke-width="1.5" />
<path d="M3105.5 508.3L3105.5 571" stroke="#161616" stroke-width="2" />
<path d="M3124.5 508.3L3124.5 571" stroke="#161616" stroke-width="1.5" />
<path d="M3128.5 508.3L3128.5 571" stroke="#161616" stroke-width="1.5" />
<path d="M3138.2 508.3L3138.2 571" stroke="#161616" stroke-width="2" />
<path d="M3118.5 514.3L3118.5 565" stroke="#555" stroke-width="1.5" stroke-dasharray="26 8" />
<rect x="3124.5" y="508.3" width="14.699999999999818" height="4.500" fill="#161616"/>
<rect x="3124.5" y="566.5" width="14.699999999999818" height="4.500" fill="#161616"/>
<rect x="3104.5" y="571" width="34.69999999999982" height="106.20000000000005" fill="url(#hat)"/>
<rect x="3128.096" y="571" width="11.103999999999814" height="106.20000000000005" fill="url(#hat2)"/>
<rect x="3107.0" y="572.5" width="31.199999999999818" height="103.20000000000005" fill="none" stroke="#161616" stroke-width="3"/>
<rect x="3104.5" y="571" width="5.500" height="106.20000000000005" fill="#161616"/>
<path d="M3128.096 571L3128.096 677.2" stroke="#161616" stroke-width="1.5" />
<path d="M3129.5 677L3129.5 761" stroke="#161616" stroke-width="1.5" />
<rect x="3104.5" y="760.4" width="34.69999999999982" height="146.20000000000005" fill="url(#hat)"/>
<rect x="3128.096" y="760.4" width="11.103999999999814" height="146.20000000000005" fill="url(#hat2)"/>
<rect x="3107.0" y="761.9" width="31.199999999999818" height="143.20000000000005" fill="none" stroke="#161616" stroke-width="3"/>
<rect x="3104.5" y="760.4" width="5.500" height="146.20000000000005" fill="#161616"/>
<path d="M3128.096 760.4L3128.096 906.6" stroke="#161616" stroke-width="1.5" />
<path d="M3105.5 906.6L3105.5 1032" stroke="#161616" stroke-width="2" />
<path d="M3124.5 906.6L3124.5 1032" stroke="#161616" stroke-width="1.5" />
<path d="M3128.5 906.6L3128.5 1032" stroke="#161616" stroke-width="1.5" />
<path d="M3138.2 906.6L3138.2 1032" stroke="#161616" stroke-width="2" />
<path d="M3118.5 912.6L3118.5 1026" stroke="#555" stroke-width="1.5" stroke-dasharray="26 8" />
<rect x="3124.5" y="906.6" width="14.699999999999818" height="4.500" fill="#161616"/>
<rect x="3124.5" y="1027.5" width="14.699999999999818" height="4.500" fill="#161616"/>
<rect x="3104.5" y="1032" width="34.69999999999982" height="125.59999999999991" fill="url(#hat)"/>
<rect x="3128.096" y="1032" width="11.103999999999814" height="125.59999999999991" fill="url(#hat2)"/>
<rect x="3107.0" y="1033.5" width="31.199999999999818" height="122.59999999999991" fill="none" stroke="#161616" stroke-width="3"/>
<rect x="3104.5" y="1032" width="5.500" height="125.59999999999991" fill="#161616"/>
<path d="M3128.096 1032L3128.096 1157.6" stroke="#161616" stroke-width="1.5" />
<path d="M3105.5 1157.6L3105.5 1283" stroke="#161616" stroke-width="2" />
<path d="M3124.5 1157.6L3124.5 1283" stroke="#161616" stroke-width="1.5" />
<path d="M3128.5 1157.6L3128.5 1283" stroke="#161616" stroke-width="1.5" />
<path d="M3138.2 1157.6L3138.2 1283" stroke="#161616" stroke-width="2" />
<path d="M3118.5 1163.6L3118.5 1277" stroke="#555" stroke-width="1.5" stroke-dasharray="26 8" />
<rect x="3124.5" y="1157.6" width="14.699999999999818" height="4.500" fill="#161616"/>
<rect x="3124.5" y="1278.5" width="14.699999999999818" height="4.500" fill="#161616"/>
<rect x="3104.5" y="1283" width="34.69999999999982" height="115.90000000000009" fill="url(#hat)"/>
<rect x="3128.096" y="1283" width="11.103999999999814" height="115.90000000000009" fill="url(#hat2)"/>
<rect x="3107.0" y="1284.5" width="31.199999999999818" height="112.90000000000009" fill="none" stroke="#161616" stroke-width="3"/>
<rect x="3104.5" y="1283" width="5.500" height="115.90000000000009" fill="#161616"/>
<path d="M3128.096 1283L3128.096 1398.9" stroke="#161616" stroke-width="1.5" />
<path d="M3105.5 1398.9L3105.5 1524.5" stroke="#161616" stroke-width="2" />
<path d="M3124.5 1398.9L3124.5 1524.5" stroke="#161616" stroke-width="1.5" />
<path d="M3128.5 1398.9L3128.5 1524.5" stroke="#161616" stroke-width="1.5" />
<path d="M3138.2 1398.9L3138.2 1524.5" stroke="#161616" stroke-width="2" />
<path d="M3118.5 1404.9L3118.5 1518.5" stroke="#555" stroke-width="1.5" stroke-dasharray="26 8" />
<rect x="3124.5" y="1398.9" width="14.699999999999818" height="4.500" fill="#161616"/>
<rect x="3124.5" y="1520.0" width="14.699999999999818" height="4.500" fill="#161616"/>
<rect x="3104.5" y="1524.5" width="34.69999999999982" height="114.40000000000009" fill="url(#hat)"/>
<rect x="3128.096" y="1524.5" width="11.103999999999814" height="114.40000000000009" fill="url(#hat2)"/>
<rect x="3107.0" y="1526.0" width="31.199999999999818" height="111.40000000000009" fill="none" stroke="#161616" stroke-width="3"/>
<rect x="3104.5" y="1524.5" width="5.500" height="114.40000000000009" fill="#161616"/>
<path d="M3128.096 1524.5L3128.096 1638.9" stroke="#161616" stroke-width="1.5" />
<path d="M3105.5 1638.9L3105.5 1763.7" stroke="#161616" stroke-width="2" />
<path d="M3124.5 1638.9L3124.5 1763.7" stroke="#161616" stroke-width="1.5" />
<path d="M3128.5 1638.9L3128.5 1763.7" stroke="#161616" stroke-width="1.5" />
<path d="M3138.2 1638.9L3138.2 1763.7" stroke="#161616" stroke-width="2" />
<path d="M3118.5 1644.9L3118.5 1757.7" stroke="#555" stroke-width="1.5" stroke-dasharray="26 8" />
<rect x="3124.5" y="1638.9" width="14.699999999999818" height="4.500" fill="#161616"/>
<rect x="3124.5" y="1759.2" width="14.699999999999818" height="4.500" fill="#161616"/>
<rect x="3104.5" y="1763.7" width="34.69999999999982" height="42.299999999999955" fill="url(#hat)"/>
<rect x="3128.096" y="1763.7" width="11.103999999999814" height="42.299999999999955" fill="url(#hat2)"/>
<rect x="3107.0" y="1765.2" width="31.199999999999818" height="39.299999999999955" fill="none" stroke="#161616" stroke-width="3"/>
<rect x="3104.5" y="1763.7" width="5.500" height="42.299999999999955" fill="#161616"/>
<path d="M3128.096 1763.7L3128.096 1806" stroke="#161616" stroke-width="1.5" />
<path d="M3240 592.8L3141 592.8" stroke="#707070" stroke-width="1.8" stroke-dasharray="24 19.500" />
<circle cx="3271.700" cy="592.8" r="32" fill="none" stroke="#8c8c8c" stroke-width="1.150"/>
<path d="M3240 844.5L3141 844.5" stroke="#707070" stroke-width="1.8" stroke-dasharray="24 19.500" />
<circle cx="3271.700" cy="844.5" r="32" fill="none" stroke="#8c8c8c" stroke-width="1.150"/>
<path d="M3240 1094L3141 1094" stroke="#707070" stroke-width="1.8" stroke-dasharray="24 19.500" />
<circle cx="3271.700" cy="1094" r="32" fill="none" stroke="#8c8c8c" stroke-width="1.150"/>
<path d="M3240 1346L3141 1346" stroke="#707070" stroke-width="1.8" stroke-dasharray="24 19.500" />
<circle cx="3271.700" cy="1346" r="32" fill="none" stroke="#8c8c8c" stroke-width="1.150"/>
<path d="M3240 1576.5L3141 1576.5" stroke="#707070" stroke-width="1.8" stroke-dasharray="24 19.500" />
<circle cx="3271.700" cy="1576.5" r="32" fill="none" stroke="#8c8c8c" stroke-width="1.150"/>
<text x="3271.7" y="602.5999999999999" font-size="27.5" fill="#6b6b6b" text-anchor="middle">B</text>
<text x="3271.7" y="854.3" font-size="27.5" fill="#6b6b6b" text-anchor="middle">C</text>
<text x="3271.7" y="1103.8" font-size="27.5" fill="#6b6b6b" text-anchor="middle">D</text>
<text x="3271.7" y="1355.8" font-size="27.5" fill="#6b6b6b" text-anchor="middle">E</text>
<text x="3271.7" y="1586.3" font-size="27.5" fill="#6b6b6b" text-anchor="middle">F</text>
<text x="3355" y="593.3" font-size="18" fill="#2a2a2a" text-anchor="middle" transform="rotate(-90 3355 593.3)">0,29</text>
<text x="3355" y="844.5" font-size="18" fill="#2a2a2a" text-anchor="middle" transform="rotate(-90 3355 844.5)">0,30</text>
<text x="3355" y="1094" font-size="18" fill="#2a2a2a" text-anchor="middle" transform="rotate(-90 3355 1094)">0,29</text>
<text x="3355" y="1346" font-size="18" fill="#2a2a2a" text-anchor="middle" transform="rotate(-90 3355 1346)">0,30</text>
<text x="3355" y="1576.5" font-size="18" fill="#2a2a2a" text-anchor="middle" transform="rotate(-90 3355 1576.5)">0,30</text>
<path d="M3358.8 411L3358.8 1806" stroke="#a48a4e" stroke-width="2.4" stroke-dasharray="14 34 18 26 10 22 8 48 16 30" />
<path d="M3066.6 540.8L3188 540.8" stroke="#161616" stroke-width="2" />
<text x="3145" y="533.1999999999999" font-size="18" fill="#1c1c1c" text-anchor="start">1,00</text>
<text x="3145" y="559.1999999999999" font-size="18" fill="#1c1c1c" text-anchor="start">0,80</text>
<text x="3204.5" y="540.8" font-size="16" fill="#1c1c1c" text-anchor="middle" transform="rotate(-90 3204.5 540.8)">09</text>
<path d="M3066.6 971L3188 971" stroke="#161616" stroke-width="2" />
<text x="3145" y="963.4" font-size="18" fill="#1c1c1c" text-anchor="start">2,00</text>
<text x="3145" y="989.4" font-size="18" fill="#1c1c1c" text-anchor="start">1,50</text>
<text x="3204.5" y="971" font-size="16" fill="#1c1c1c" text-anchor="middle" transform="rotate(-90 3204.5 971)">10</text>
<path d="M3066.6 1220.4L3188 1220.4" stroke="#161616" stroke-width="2" />
<text x="3145" y="1212.8000000000002" font-size="18" fill="#1c1c1c" text-anchor="start">2,00</text>
<text x="3145" y="1238.8000000000002" font-size="18" fill="#1c1c1c" text-anchor="start">1,50</text>
<text x="3204.5" y="1220.4" font-size="16" fill="#1c1c1c" text-anchor="middle" transform="rotate(-90 3204.5 1220.4)">11</text>
<path d="M3066.6 1460.6L3188 1460.6" stroke="#161616" stroke-width="2" />
<text x="3145" y="1453.0" font-size="18" fill="#1c1c1c" text-anchor="start">2,00</text>
<text x="3145" y="1479.0" font-size="18" fill="#1c1c1c" text-anchor="start">1,50</text>
<text x="3204.5" y="1460.6" font-size="16" fill="#1c1c1c" text-anchor="middle" transform="rotate(-90 3204.5 1460.6)">12</text>
<path d="M3066.6 1702.9L3188 1702.9" stroke="#161616" stroke-width="2" />
<text x="3145" y="1695.3000000000002" font-size="18" fill="#1c1c1c" text-anchor="start">2,00</text>
<text x="3145" y="1721.3000000000002" font-size="18" fill="#1c1c1c" text-anchor="start">1,50</text>
<text x="3204.5" y="1702.9" font-size="16" fill="#1c1c1c" text-anchor="middle" transform="rotate(-90 3204.5 1702.9)">13</text>
<text x="3145" y="417" font-size="18" fill="#1c1c1c" text-anchor="start">0,80</text>
<rect x="3170.5" y="1082.7" width="31" height="14.5" fill="#cccccc" stroke="#161616" stroke-width="2.2"/>
<text x="3195" y="1094.2" font-size="15" fill="#1c1c1c" text-anchor="start" transform="rotate(-90 3195 1094.2)">9</text>
<rect x="3170.5" y="1291" width="31" height="14.5" fill="#cccccc" stroke="#161616" stroke-width="2.2"/>
<text x="3195" y="1302.5" font-size="15" fill="#1c1c1c" text-anchor="start" transform="rotate(-90 3195 1302.5)">2</text>
<rect x="3170.5" y="1339.2" width="31" height="14.5" fill="#cccccc" stroke="#161616" stroke-width="2.2"/>
<text x="3195" y="1350.7" font-size="15" fill="#1c1c1c" text-anchor="start" transform="rotate(-90 3195 1350.7)">6</text>
<path d="M3120 1090L3170.5 1090" stroke="#161616" stroke-width="2" />
<path d="M3090 1094L3150 1094" stroke="#444" stroke-width="1.5" />
</g>
<g clip-path="url(#stripclip)">
<path d="M1271.6 1799L1271.6 1803" stroke="#161616" stroke-width="2.2" />
<path d="M1365.3 1778L1365.3 1803" stroke="#161616" stroke-width="2.2" />
<path d="M1405 1778L1405 1803" stroke="#161616" stroke-width="2.2" />
<rect x="1486.500" y="1778" width="35" height="25" fill="url(#hat)"/>
<rect x="1504" y="1778" width="17.500" height="25" fill="url(#hat2)"/>
<rect x="1486.500" y="1778" width="6" height="25" fill="#161616"/>
<path d="M1520.5 1778L1520.5 1803" stroke="#161616" stroke-width="2.5" />
<path d="M1505 1778L1505 1803" stroke="#161616" stroke-width="2" />
<path d="M1770 1757L1770 1765" stroke="#333" stroke-width="1.5" />
<path d="M1815 1760L1815 1780" stroke="#161616" stroke-width="2.2" />
<path d="M1803 1758.500h14v9.500a12 10 0 0 1 -14 -9.500z" stroke="none" stroke-width="0" fill="#161616"/>
<path d="M1817 1759a11 10 0 0 0 10 -1" stroke="#333" stroke-width="1.2" fill="none"/>
<path d="M1733 1789L1748 1789" stroke="#161616" stroke-width="2" />
<path d="M1733 1789L1733 1803" stroke="#161616" stroke-width="2" />
<path d="M1735 1791L1745 1803" stroke="#444" stroke-width="1.2" />
<path d="M1757 1789L1783 1789" stroke="#161616" stroke-width="2" />
<path d="M1770 1782L1770 1803" stroke="#161616" stroke-width="2" />
<path d="M1790 1789L1806 1789" stroke="#161616" stroke-width="2" />
<path d="M1806 1789L1806 1803" stroke="#161616" stroke-width="2" />
<rect x="2019" y="1758" width="35" height="45" fill="url(#hat)"/>
<rect x="2019" y="1758" width="14" height="45" fill="url(#hat2)"/>
<path d="M2020 1758L2020 1803" stroke="#161616" stroke-width="2.5" />
<path d="M2033 1758L2033 1803" stroke="#161616" stroke-width="2" />
<path d="M2048 1758L2048 1803" stroke="#161616" stroke-width="2" />
<path d="M2053 1758L2053 1803" stroke="#161616" stroke-width="2.5" />
<text x="2142.6" y="1776" font-size="18" fill="#1c1c1c" text-anchor="start">15,01 m²</text>
<path d="M2174.7 1775L2174.7 1803" stroke="#161616" stroke-width="2.2" />
<path d="M2301 1758L2301 1803" stroke="#161616" stroke-width="2" stroke-dasharray="14 4 3 4" />
<rect x="2309" y="1758" width="7" height="45" fill="#161616"/><rect x="2318" y="1758" width="6" height="45" fill="#161616"/>
<path d="M2376.7 1758L2376.7 1803" stroke="#4a4a4a" stroke-width="2" />
<path d="M2391.3 1758L2391.3 1803" stroke="#4a4a4a" stroke-width="2" />
<path d="M2407 1758L2407 1803" stroke="#4a4a4a" stroke-width="2" />
<path d="M2422.8 1758L2422.8 1803" stroke="#4a4a4a" stroke-width="2" />
<path d="M2439.2 1758L2439.2 1803" stroke="#4a4a4a" stroke-width="2" />
<path d="M2455.3 1758L2455.3 1803" stroke="#4a4a4a" stroke-width="2" />
<path d="M2471.7 1758L2471.7 1803" stroke="#4a4a4a" stroke-width="2" />
<path d="M2456 1771L2471 1758" stroke="#555" stroke-width="1.2" />
<path d="M2578.3 1758L2578.3 1803" stroke="#333" stroke-width="2" stroke-dasharray="8 16 30 4" />
<path d="M2849 1758L2849 1803" stroke="#333" stroke-width="2" stroke-dasharray="8 16 30 4" />
<text x="2712" y="1776" font-size="18" fill="#1c1c1c" text-anchor="start">140,37 m²</text>
<path d="M2714 1794L2714 1803" stroke="#161616" stroke-width="2.2" />
<path d="M2845 1794L2845 1803" stroke="#161616" stroke-width="2.2" />
</g>
</svg>
<div style="left:2851px;top:437px;width:39px;height:78px;background:#cccccc;border:1.500px solid #a3b2c0;border-radius:7px"></div>
<div style="left:1242px;top:260px;width:2px;height:1546px;background:#8996a3"></div>
<div style="left:1268px;top:1640px;width:472px;height:137px;background:#cccccc;border:1.500px solid #a3b2c0;border-radius:14px;box-shadow:0 6px 10px rgba(0,0,0,0.22)"></div>
<div style="left:1278px;top:1720px;width:60px;height:48px;background:#a9bdcb;border-radius:10px"></div>
<div style="left:4px;top:1803px;width:3356px;height:3px;background:#c3c6c9"></div>
<div style="left:116px;top:1803px;width:6px;height:3px;background:#5f7fae"></div>
<div style="left:4px;top:1803px;width:112px;height:3px;background:#5b5f68"></div>
<svg style="left:3340px;top:1786px" width="20" height="20" viewBox="0 0 20 20"><path d="M20 4V20H4A16 16 0 0 0 20 4z" fill="#0c0c0c"/></svg>
<svg style="left:0px;top:1786px" width="24" height="20" viewBox="0 0 24 20"><path d="M0 0V20H24V17.500H16A12.500 12.500 0 0 1 3.500 5V0z" fill="#1a2412"/><path d="M3.500 0V5A12.500 12.500 0 0 0 16 17.500H24" fill="none" stroke="#555a62" stroke-width="1.200"/></svg>
<div style="left:597.3px;top:111px;width:2259.5px;height:1648px;background:#ffffff;border:2px solid #c3cedb;border-radius:4px;box-shadow:0 0 3px rgba(0,0,0,0.12)"></div>
<span class="t" style="left:630.3px;top:156.2px;font-size:34px;line-height:34px;color:#000;font-weight:700;transform:scaleX(0.9520);">Plan versions</span>
<div style="left:631px;top:1753px;width:2184px;height:2px;background:#bcc8d6"></div>
<div style="left:2813px;top:698px;width:2px;height:1056px;background:#bcc8d6"></div>
<svg style="left:2785px;top:163px" width="20" height="20" viewBox="0 0 20 20"><path d="M2 2 18 18M18 2 2 18" stroke="#000" stroke-width="3.600" stroke-linecap="round"/></svg>
<div style="left:631px;top:265px;width:2184px;height:434px;border:2px solid #b3c1cf;border-radius:3px"></div>
<div style="left:633px;top:267px;width:2180px;height:101px;background:#edf1f6"></div>
<div style="left:631px;top:367px;width:2184px;height:2px;background:#b3c1cf"></div>
<div style="left:633px;top:479px;width:2180px;height:2px;background:#ccd8e3"></div>
<div style="left:633px;top:589px;width:2180px;height:2px;background:#ccd8e3"></div>
<div style="left:1304.5px;top:297px;width:2px;height:40px;background:#c2cedb"></div>
<div style="left:1607.5px;top:297px;width:2px;height:40px;background:#c2cedb"></div>
<div style="left:1971.5px;top:297px;width:2px;height:40px;background:#c2cedb"></div>
<div style="left:2122.5px;top:297px;width:2px;height:40px;background:#c2cedb"></div>
<div style="left:2455.5px;top:297px;width:2px;height:40px;background:#c2cedb"></div>
<span class="t" style="left:654.0px;top:304.7px;font-size:28px;line-height:28px;color:#000;font-weight:700;transform:scaleX(0.9284);">Filename</span>
<span class="t" style="left:1337.3px;top:304.7px;font-size:28px;line-height:28px;color:#000;font-weight:700;transform:scaleX(0.9344);">Uploaded by</span>
<span class="t" style="left:1640.0px;top:304.7px;font-size:28px;line-height:28px;color:#000;font-weight:700;transform:scaleX(0.9343);">Uploaded on</span>
<span class="t" style="left:2003.4px;top:304.7px;font-size:28px;line-height:28px;color:#000;font-weight:700;transform:scaleX(0.9286);">Approval</span>
<span class="t" style="left:2153.9px;top:304.7px;font-size:28px;line-height:28px;color:#000;font-weight:700;transform:scaleX(0.9291);">Version</span>
<span class="t" style="left:654.0px;top:412.6px;font-size:28px;line-height:28px;color:#000;transform:scaleX(0.9618);">Ground_Floor_v3.png</span>
<span class="t" style="left:1337.3px;top:412.6px;font-size:28px;line-height:28px;color:#000;letter-spacing:-0.21px;">Robert Hammer</span>
<span class="t" style="left:1640.0px;top:412.6px;font-size:28px;line-height:28px;color:#000;letter-spacing:0.14px;">2024-11-28 10:05 am</span>
<span class="t" style="left:2017.4px;top:412.6px;font-size:28px;line-height:28px;color:#000;">-</span>
<span class="t" style="left:2153.9px;top:412.6px;font-size:28px;line-height:28px;color:#000;letter-spacing:0.07px;">V3</span>
<span class="t" style="left:2203.7px;top:412.6px;font-size:28px;line-height:28px;color:#000;letter-spacing:0.10px;">Current version</span>
<svg style="left:2747px;top:408.8px" width="32" height="32" viewBox="0 0 512 512"><path fill="#000" d="M288 32c0-17.700-14.300-32-32-32s-32 14.300-32 32V274.700l-73.400-73.400c-12.500-12.500-32.800-12.500-45.300 0s-12.500 32.800 0 45.300l128 128c12.500 12.500 32.800 12.500 45.300 0l128-128c12.500-12.500 12.500-32.800 0-45.300s-32.800-12.500-45.300 0L288 274.700V32zM64 352c-35.300 0-64 28.700-64 64v32c0 35.300 28.700 64 64 64H448c35.300 0 64-28.700 64-64V416c0-35.300-28.700-64-64-64H346.500l-45.300 45.300c-25 25-65.500 25-90.500 0L165.500 352H64zm368 56a24 24 0 1 1 0 48 24 24 0 1 1 0-48z"/></svg>
<span class="t" style="left:654.0px;top:522.3px;font-size:28px;line-height:28px;color:#000;transform:scaleX(0.9618);">Ground_Floor_v2.png</span>
<span class="t" style="left:1337.3px;top:522.3px;font-size:28px;line-height:28px;color:#000;letter-spacing:-0.21px;">Robert Hammer</span>
<span class="t" style="left:1640.0px;top:522.3px;font-size:28px;line-height:28px;color:#000;letter-spacing:0.03px;">2024-10-22 05:30 pm</span>
<span class="t" style="left:2017.4px;top:522.3px;font-size:28px;line-height:28px;color:#000;">-</span>
<span class="t" style="left:2153.9px;top:522.3px;font-size:28px;line-height:28px;color:#000;letter-spacing:0.07px;">V2</span>
<svg style="left:2690px;top:518.5px" width="28" height="32" viewBox="0 0 448 512"><path fill="#000" d="M135.200 17.700L128 32H32C14.300 32 0 46.300 0 64S14.300 96 32 96H416c17.700 0 32-14.300 32-32s-14.300-32-32-32H320l-7.200-14.300C307.400 6.800 296.300 0 284.200 0H163.800c-12.100 0-23.200 6.800-28.600 17.700zM416 128H32L53.200 467c1.600 25.300 22.600 45 47.900 45H346.900c25.300 0 46.300-19.700 47.900-45L416 128z"/></svg>
<svg style="left:2747px;top:518.5px" width="32" height="32" viewBox="0 0 512 512"><path fill="#000" d="M288 32c0-17.700-14.300-32-32-32s-32 14.300-32 32V274.700l-73.400-73.400c-12.500-12.500-32.800-12.500-45.300 0s-12.500 32.800 0 45.300l128 128c12.500 12.500 32.800 12.500 45.300 0l128-128c12.500-12.500 12.500-32.800 0-45.300s-32.800-12.500-45.300 0L288 274.700V32zM64 352c-35.300 0-64 28.700-64 64v32c0 35.300 28.700 64 64 64H448c35.300 0 64-28.700 64-64V416c0-35.300-28.700-64-64-64H346.500l-45.300 45.300c-25 25-65.500 25-90.500 0L165.500 352H64zm368 56a24 24 0 1 1 0 48 24 24 0 1 1 0-48z"/></svg>
<span class="t" style="left:654.0px;top:631.8px;font-size:28px;line-height:28px;color:#000;transform:scaleX(0.9618);">Ground_Floor_v1.png</span>
<span class="t" style="left:1337.3px;top:631.8px;font-size:28px;line-height:28px;color:#000;letter-spacing:-0.21px;">Robert Hammer</span>
<span class="t" style="left:1640.0px;top:631.8px;font-size:28px;line-height:28px;color:#000;letter-spacing:0.14px;">2024-10-22 11:03 am</span>
<span class="t" style="left:2017.4px;top:631.8px;font-size:28px;line-height:28px;color:#000;">-</span>
<span class="t" style="left:2153.9px;top:631.8px;font-size:28px;line-height:28px;color:#000;letter-spacing:0.07px;">V1</span>
<svg style="left:2690px;top:628.0px" width="28" height="32" viewBox="0 0 448 512"><path fill="#000" d="M135.200 17.700L128 32H32C14.300 32 0 46.300 0 64S14.300 96 32 96H416c17.700 0 32-14.300 32-32s-14.300-32-32-32H320l-7.200-14.300C307.400 6.800 296.300 0 284.200 0H163.800c-12.100 0-23.200 6.800-28.600 17.700zM416 128H32L53.200 467c1.600 25.300 22.600 45 47.900 45H346.900c25.300 0 46.300-19.700 47.900-45L416 128z"/></svg>
<svg style="left:2747px;top:628.0px" width="32" height="32" viewBox="0 0 512 512"><path fill="#000" d="M288 32c0-17.700-14.300-32-32-32s-32 14.300-32 32V274.700l-73.400-73.400c-12.500-12.500-32.800-12.500-45.300 0s-12.500 32.800 0 45.300l128 128c12.500 12.500 32.800 12.500 45.300 0l128-128c12.500-12.500 12.500-32.800 0-45.300s-32.800-12.500-45.300 0L288 274.700V32zM64 352c-35.300 0-64 28.700-64 64v32c0 35.300 28.700 64 64 64H448c35.300 0 64-28.700 64-64V416c0-35.300-28.700-64-64-64H346.500l-45.300 45.300c-25 25-65.500 25-90.500 0L165.500 352H64zm368 56a24 24 0 1 1 0 48 24 24 0 1 1 0-48z"/></svg>
<div style="left:638px;top:478px;width:1858px;height:114px;border:6px solid #fd8608;border-radius:12px"></div>
<div style="left:977px;top:512px;width:56px;height:56px;background:#fd8608;border-radius:50%"></div>
<span class="t" style="left:997.2px;top:526.3px;font-size:28px;line-height:28px;color:#1d1d1d;">1</span>
<svg style="left:1080px;top:600px" width="220" height="300" viewBox="1080 600 220 300">
<path d="M1273.500 881.500 1122 643.500" stroke="#fd8608" stroke-width="14.500" stroke-linecap="butt"/><circle cx="1272.300" cy="879.600" r="6.500" fill="#fd8608"/>
<path d="M1105 617.500 1138.500 634.300 1106.200 654.500z" fill="#fd8608" stroke="#fd8608" stroke-width="4" stroke-linejoin="round"/>
</svg>
<div style="left:3222px;top:1566px;width:100px;height:100px;background:#0561c7;border-radius:50%;box-shadow:0 2px 8px rgba(0,0,0,0.3)"></div>
<span class="t" style="left:3248.8px;top:1578.7px;font-size:76px;line-height:76px;color:#ffffff;font-weight:700;">?</span>
</body></html>
